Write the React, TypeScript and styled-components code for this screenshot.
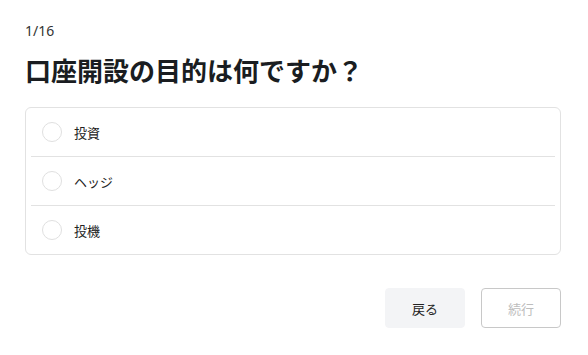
import styled, { createGlobalStyle } from 'styled-components';

const GlobalStyle = createGlobalStyle`
  html, body {
    margin: 0;
    padding: 0;
    background: #fff;
  }
  body {
    font-family: 'Noto Sans', 'Noto Sans CJK JP', sans-serif;
    color: #1f2328;
  }
`;

const options = ['投資', 'ヘッジ', '投機'];

const App = () => {
  return (
    <>
      <GlobalStyle />
      <Page>
        <Step>1/16</Step>
        <Title>口座開設の目的は何ですか？</Title>
        <OptionList>
          {options.map(label => (
            <Option key={label}>
              <Radio />
              <OptionLabel>{label}</OptionLabel>
            </Option>
          ))}
        </OptionList>
        <Actions>
          <Button variant="back">戻る</Button>
          <Button variant="next" disabled>
            続行
          </Button>
        </Actions>
      </Page>
    </>
  );
};

export default App;

const Page = styled.div`
  width: 536px;
  padding: 21px 0 0 25px;
  display: flex;
  flex-direction: column;
`;

const Step = styled.div`
  font-family: 'Noto Sans', 'Noto Sans CJK JP', sans-serif;
  font-size: 14px;
  line-height: 20px;
  color: #333;
`;

const Title = styled.h1`
  margin: 11px 0 0;
  font-family: 'Noto Sans CJK JP', sans-serif;
  font-size: 26px;
  font-weight: 700;
  line-height: 36px;
  color: #1a1d21;
`;

const OptionList = styled.ul`
  list-style: none;
  margin: 19px 0 0;
  padding: 0 5px;
  border: 1px solid #e2e2e2;
  border-radius: 6px;
`;

const Option = styled.li`
  display: flex;
  align-items: center;
  gap: 12px;
  height: 48px;
  padding: 0 11px;
  border-bottom: 1px solid #e2e2e2;

  &:last-child {
    border-bottom: 0;
  }
`;

const Radio = styled.span`
  width: 18px;
  height: 18px;
  border: 1px solid #e0e0e0;
  border-radius: 50%;
  background: #fff;
`;

const OptionLabel = styled.span`
  font-family: 'Noto Sans CJK JP', sans-serif;
  font-size: 13px;
  color: #222;
`;

const Actions = styled.div`
  margin-top: 33px;
  display: flex;
  justify-content: flex-end;
  gap: 16px;
`;

const Button = styled.button<{ variant: 'back' | 'next' }>`
  width: 80px;
  height: 40px;
  border-radius: 4px;
  font-family: 'Noto Sans CJK JP', sans-serif;
  font-size: 13px;
  cursor: pointer;
  border: 1px solid ${p => (p.variant === 'back' ? '#f3f4f6' : '#c8c8c8')};
  background: ${p => (p.variant === 'back' ? '#f3f4f6' : '#fff')};
  color: ${p => (p.variant === 'back' ? '#222' : '#bdbdbd')};
`;
